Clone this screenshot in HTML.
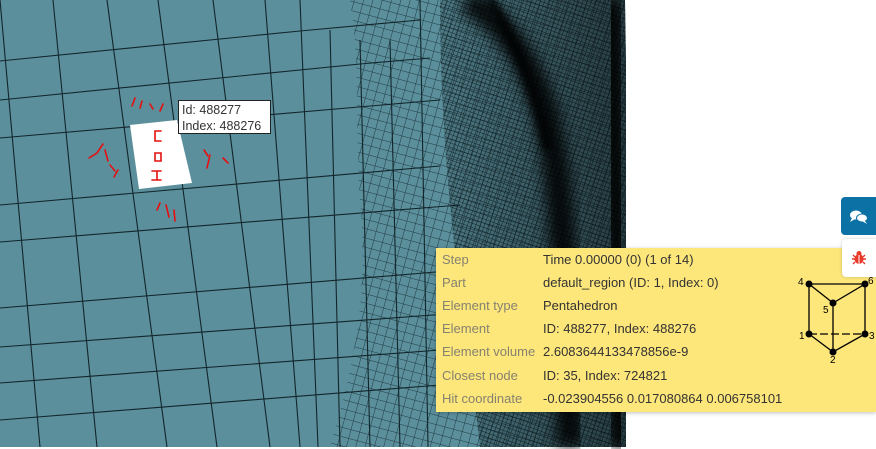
<!DOCTYPE html>
<html><head><meta charset="utf-8"><style>
body{margin:0;width:876px;height:449px;overflow:hidden;background:#fff;font-family:"Liberation Sans",Arial,sans-serif;position:relative}
svg{position:absolute;left:0;top:0}
.tip{position:absolute;left:178px;top:100px;width:93px;height:34px;background:#fff;border:1px solid #222;font-size:12.5px;color:#333;line-height:16px;padding:1px 0 0 3px;box-sizing:border-box}
.panel{position:absolute;left:436px;top:248px;width:440px;height:164px;background:#fde67a;box-shadow:0 1px 4px rgba(0,0,0,.25)}
.row{position:absolute;left:6px;font-size:13px;height:20px;line-height:20px}
.row .l{color:#858270;position:absolute;left:0;white-space:nowrap}
.row .v{color:#333;position:absolute;left:101px;white-space:nowrap}
.btn1{position:absolute;left:841px;top:197px;width:35px;height:38px;background:#0c72a6;border-radius:4px 0 0 4px}
.btn2{position:absolute;left:842px;top:239px;width:34px;height:38px;background:#fff;border-radius:4px 0 0 4px;box-shadow:0 0 3px rgba(0,0,0,.2)}
</style></head><body>
<svg width="876" height="449" viewBox="0 0 876 449">
<defs>
<pattern id="dense" width="4" height="4" patternUnits="userSpaceOnUse" patternTransform="rotate(20)">
<path d="M0 0H4M0 0V4" stroke="#0d1e22" stroke-width="1"/></pattern>
<pattern id="mid" width="9" height="9" patternUnits="userSpaceOnUse" patternTransform="rotate(15)">
<path d="M0 0H9M0 0V9" stroke="#12262b" stroke-width="1"/></pattern>
<linearGradient id="dk" x1="0" x2="1"><stop offset="0" stop-color="#000" stop-opacity=".15"/><stop offset="1" stop-color="#000" stop-opacity=".6"/></linearGradient>
<filter id="bl"><feGaussianBlur stdDeviation="7"/></filter>
<filter id="bl2"><feGaussianBlur stdDeviation="3"/></filter>
</defs>
<path d="M0 0H625L632 447H0Z" fill="#5b8f9c"/>
<g stroke="#12262b" stroke-width="1.1" fill="none">
<path d="M0 61L300 31L420 20M0 100L360 64L430 58M0 138L440 100M0 205L440 166M0 242L460 205M0 308L460 270M0 347L460 313M0 383L440 350M0 420L440 385"/>
<path d="M0 0L40 447M53 0L97 447M107 0L167 447M158 0L217 447M213 0L270 447M265 0L300 447M300 0L318 447M330 30L340 447M360 40L370 447M390 40L400 447M420 0L428 447"/>
</g>
<path d="M350 0L625 0L632 447L330 447C350 380 370 300 360 200C355 120 360 60 350 0Z" fill="url(#mid)" opacity=".8"/>
<path d="M440 0L625 0L632 447L480 447C470 350 440 200 440 0Z" fill="url(#dense)" opacity=".85"/>
<path d="M440 0L625 0L632 447L480 447C470 350 440 200 440 0Z" fill="url(#dk)"/>
<path d="M467 0C500 20 525 50 545 110C558 160 562 220 565 300L570 447" stroke="#000" stroke-width="26" fill="none" filter="url(#bl)" opacity=".85"/>
<path d="M490 0C515 40 535 90 548 150" stroke="#000" stroke-width="10" fill="none" filter="url(#bl2)" opacity=".7"/>
<path d="M612 0L620 447" stroke="#000" stroke-width="18" fill="none" filter="url(#bl)"/>
<rect x="626" y="0" width="250" height="449" fill="#fff"/>
<path d="M130 125L177 120L192 183L139 189Z" fill="#fff"/>
<g stroke="#e41010" stroke-width="1.6" fill="none" stroke-linecap="round">
<path d="M161 131H155V141H161M155 153H161V161H155ZM152 171H161M157 171V180M152 180H161"/>
<path d="M135 98L132 106M142 101L140 108M150 104L153 109M163 104L160 111"/>
<path d="M89 158L97 153L103 144M105 150L108 161M110 165L115 171M114 177L118 170"/>
<path d="M204 150L208 156M210 155L207 168M223 158L228 163"/>
<path d="M157 210L160 203M166 205L169 217M174 210L175 221"/>
<path d="M442 361C470 366 500 363 530 357" stroke-width="1.4"/>
</g>
</svg>
<div class="tip">Id: 488277<br>Index: 488276</div>
<div class="panel">
<div class="row" style="top:2px"><span class="l">Step</span><span class="v">Time 0.00000 (0) (1 of 14)</span></div>
<div class="row" style="top:25px"><span class="l">Part</span><span class="v">default_region (ID: 1, Index: 0)</span></div>
<div class="row" style="top:48px"><span class="l">Element type</span><span class="v">Pentahedron</span></div>
<div class="row" style="top:71px"><span class="l">Element</span><span class="v">ID: 488277, Index: 488276</span></div>
<div class="row" style="top:94px"><span class="l">Element volume</span><span class="v">2.6083644133478856e-9</span></div>
<div class="row" style="top:118px"><span class="l">Closest node</span><span class="v">ID: 35, Index: 724821</span></div>
<div class="row" style="top:141px"><span class="l">Hit coordinate</span><span class="v">-0.023904556 0.017080864 0.006758101</span></div>
<svg style="left:350px;top:25px" width="90" height="90" viewBox="0 0 90 90">
<g stroke="#000" stroke-width="1.3" fill="none">
<path d="M23 11H79L47 30L23 11ZM23 11V61M79 11V61M47 30V79M23 61L47 79L79 61"/>
<path d="M23 61H79" stroke-dasharray="8 3"/>
</g>
<g fill="#000"><circle cx="23" cy="11" r="3.5"/><circle cx="79" cy="11" r="3.5"/><circle cx="47" cy="30" r="3.5"/><circle cx="23" cy="61" r="3.5"/><circle cx="79" cy="61" r="3.5"/><circle cx="47" cy="79" r="3.5"/></g>
<g font-size="10" font-family="Liberation Sans,sans-serif"><text x="12" y="12">4</text><text x="82" y="11">6</text><text x="37" y="40">5</text><text x="13" y="66">1</text><text x="83" y="66">3</text><text x="44" y="90">2</text></g>
</svg>
</div>
<div class="btn1"><svg width="35" height="38" viewBox="0 0 35 38"><ellipse cx="15" cy="18" rx="6" ry="4.5" fill="#fff"/><path d="M11 21L9 25L14 22Z" fill="#fff"/><ellipse cx="21" cy="21" rx="5.5" ry="4" fill="#fff" stroke="#0c72a6" stroke-width="1"/><path d="M24 24L26 27L21 24Z" fill="#fff"/></svg></div>
<div class="btn2"><svg width="34" height="38" viewBox="0 0 34 38"><g fill="#e8392a"><ellipse cx="17" cy="20" rx="4.5" ry="5"/><circle cx="17" cy="14.5" r="2.5"/></g><g stroke="#e8392a" stroke-width="1.4"><path d="M11 16L13 18M23 16L21 18M10 20H13M21 20H24M11 25L13 23M23 25L21 23"/></g><path d="M17 16V25" stroke="#fff" stroke-width="1"/></svg></div>
</body></html>
